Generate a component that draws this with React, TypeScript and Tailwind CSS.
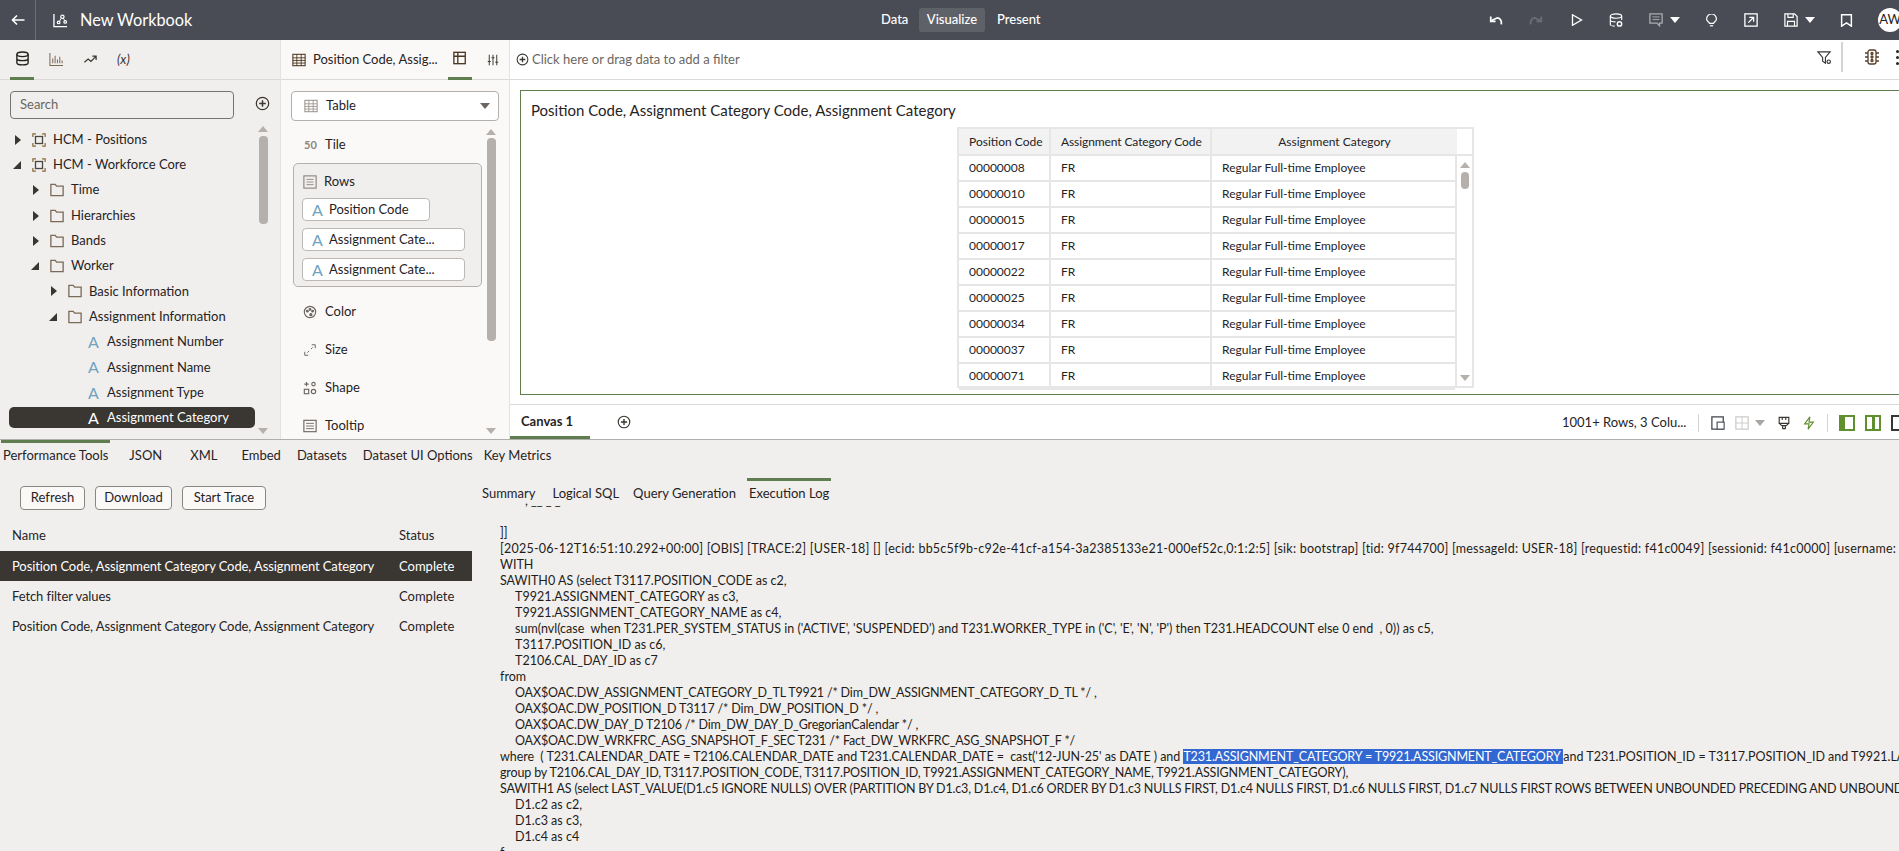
import React from 'react';

const font = { fontFamily: 'Lato, "Open Sans", sans-serif' };

const Svg = ({ size = 16, children, className = '' }: { size?: number; children: React.ReactNode; className?: string }) => (
    <svg width={size} height={size} viewBox="0 0 16 16" fill="none" stroke="currentColor" strokeWidth="1.3" className={`shrink-0 ${className}`}>
        {children}
    </svg>
);

const Caret = ({ className = '' }: { className?: string }) => (
    <span className={`block w-0 h-0 border-x-[5px] border-x-transparent border-t-[6px] ${className}`} />
);

const ArrowUp = () => <span className="block w-0 h-0 border-x-[5px] border-x-transparent border-b-[6px] border-b-[#b5b0ab]" />;
const ArrowDown = () => <span className="block w-0 h-0 border-x-[5px] border-x-transparent border-t-[6px] border-t-[#b5b0ab]" />;

const PlusCircle = ({ size = 14 }: { size?: number }) => (
    <Svg size={size}>
        <circle cx="8" cy="8" r="6.6" />
        <path d="M8 4.5v7M4.5 8h7" strokeWidth="1.6" />
    </Svg>
);

const TableIcon = ({ className = '' }: { className?: string }) => (
    <Svg size={14} className={className}>
        <rect x="1" y="1.5" width="14" height="13" strokeWidth="1.2" />
        <path d="M1 5.5h14M1 8.5h14M1 11.5h14M5.5 1.5v13M10.5 1.5v13" strokeWidth="1" />
    </Svg>
);

const AttrIcon = ({ active = false }: { active?: boolean }) => (
    <span className={`w-[11px] text-[16px] leading-none text-center shrink-0 ${active ? 'text-white' : 'text-[#6fa3c0]'}`}>A</span>
);

type TreeItem = { label: string; indent: number; kind: 'subject' | 'folder' | 'attr'; open?: boolean; active?: boolean };

const tree: TreeItem[] = [
    { label: 'HCM - Positions', indent: 0, kind: 'subject' },
    { label: 'HCM - Workforce Core', indent: 0, kind: 'subject', open: true },
    { label: 'Time', indent: 1, kind: 'folder' },
    { label: 'Hierarchies', indent: 1, kind: 'folder' },
    { label: 'Bands', indent: 1, kind: 'folder' },
    { label: 'Worker', indent: 1, kind: 'folder', open: true },
    { label: 'Basic Information', indent: 2, kind: 'folder' },
    { label: 'Assignment Information', indent: 2, kind: 'folder', open: true },
    { label: 'Assignment Number', indent: 3, kind: 'attr' },
    { label: 'Assignment Name', indent: 3, kind: 'attr' },
    { label: 'Assignment Type', indent: 3, kind: 'attr' },
    { label: 'Assignment Category', indent: 3, kind: 'attr', active: true },
];

const TreeRow = ({ item }: { item: TreeItem }) => {
    const pad = 13 + item.indent * 18;
    return (
        <div className="h-[25.3px] flex items-center relative text-[13px] text-[#26231f]" style={{ paddingLeft: pad }}>
            {item.kind !== 'attr' && (
                <span className="w-[10px] flex justify-start shrink-0">
                    {item.open ? (
                        <span className="block w-0 h-0 border-l-[8px] border-l-transparent border-b-[8px] border-b-[#3a3631]" />
                    ) : (
                        <span className="block w-0 h-0 ml-[2px] border-y-[5px] border-y-transparent border-l-[6px] border-l-[#3a3631]" />
                    )}
                </span>
            )}
            {item.kind === 'subject' && (
                <Svg size={14} className="ml-[9px] mr-[7px] text-[#4a4640]">
                    <path d="M1 4.5V1h3.5M11.5 1H15v3.5M15 11.5V15h-3.5M4.5 15H1v-3.5" strokeWidth="1.4" stroke="#8a6a3a" />
                    <rect x="4" y="4" width="8" height="8" strokeWidth="1.5" />
                </Svg>
            )}
            {item.kind === 'folder' && (
                <Svg size={14} className="ml-[9px] mr-[7px] text-[#7c6a58]">
                    <path d="M1 14.5V1.5h5l1.5 2H15v11z" strokeWidth="1.5" />
                </Svg>
            )}
            {item.kind === 'attr' && (
                <span className="mr-[8px] ml-[21px] flex">
                    <AttrIcon active={item.active} />
                </span>
            )}
            <span className={item.active ? 'text-white' : ''}>{item.label}</span>
        </div>
    );
};

const Grammar = ({ label, icon }: { label: string; icon: React.ReactNode }) => (
    <div className="h-[38px] flex items-center pl-[11px] gap-[8px] text-[13px] text-[#26231f]">
        <span className="w-[14px] flex justify-center text-[#6b6661]">{icon}</span>
        {label}
    </div>
);

const Pill = ({ label, width }: { label: string; width: string }) => (
    <div className={`h-[23px] ${width} bg-white border border-[#bdb8b3] rounded-[4px] flex items-center pl-[9px] gap-[6px] text-[13px] text-[#26231f]`}>
        <AttrIcon />
        {label}
    </div>
);

const codes = ['00000008', '00000010', '00000015', '00000017', '00000022', '00000025', '00000034', '00000037', '00000071'];

const Log = () => {
    const line = 'h-[16px] leading-[16px] whitespace-pre';
    const sub = `${line} pl-[15px]`;
    const tight = 'tracking-[-0.15px]';
    return (
        <div className="text-[12.5px] text-[#1f1c19] w-max">
            <div className="h-[22px] overflow-hidden pl-[25px]">
                <div className={`${line} -mt-[10px]`}>, __ _ _</div>
            </div>
            <div className={line}>]]</div>
            <div className={`${line} tracking-[0.23px]`}>[2025-06-12T16:51:10.292+00:00] [OBIS] [TRACE:2] [USER-18] [] [ecid: bb5c5f9b-c92e-41cf-a154-3a2385133e21-000ef52c,0:1:2:5] [sik: bootstrap] [tid: 9f744700] [messageId: USER-18] [requestid: f41c0049] [sessionid: f41c0000] [username: 3456</div>
            <div className={line}>WITH</div>
            <div className={line}>SAWITH0 AS (select T3117.POSITION_CODE as c2,</div>
            <div className={sub}>T9921.ASSIGNMENT_CATEGORY as c3,</div>
            <div className={sub}>T9921.ASSIGNMENT_CATEGORY_NAME as c4,</div>
            <div className={sub}>sum(nvl(case  when T231.PER_SYSTEM_STATUS in ('ACTIVE', 'SUSPENDED') and T231.WORKER_TYPE in ('C', 'E', 'N', 'P') then T231.HEADCOUNT else 0 end  , 0)) as c5,</div>
            <div className={sub}>T3117.POSITION_ID as c6,</div>
            <div className={sub}>T2106.CAL_DAY_ID as c7</div>
            <div className={line}>from</div>
            <div className={`${sub} ${tight}`}>OAX$OAC.DW_ASSIGNMENT_CATEGORY_D_TL T9921 /* Dim_DW_ASSIGNMENT_CATEGORY_D_TL */ ,</div>
            <div className={`${sub} ${tight}`}>OAX$OAC.DW_POSITION_D T3117 /* Dim_DW_POSITION_D */ ,</div>
            <div className={`${sub} ${tight}`}>OAX$OAC.DW_DAY_D T2106 /* Dim_DW_DAY_D_GregorianCalendar */ ,</div>
            <div className={`${sub} ${tight}`}>OAX$OAC.DW_WRKFRC_ASG_SNAPSHOT_F_SEC T231 /* Fact_DW_WRKFRC_ASG_SNAPSHOT_F */</div>
            <div className={line}>
                <span className="tracking-[-0.05px]">where  ( T231.CALENDAR_DATE = T2106.CALENDAR_DATE and T231.CALENDAR_DATE =  cast('12-JUN-25' as DATE ) and </span>
                <span className={`bg-[#3367d1] text-white ${tight}`}>T231.ASSIGNMENT_CATEGORY = T9921.ASSIGNMENT_CATEGORY </span>
                and T231.POSITION_ID = T3117.POSITION_ID and T9921.LA
            </div>
            <div className={`${line} ${tight}`}>group by T2106.CAL_DAY_ID, T3117.POSITION_CODE, T3117.POSITION_ID, T9921.ASSIGNMENT_CATEGORY_NAME, T9921.ASSIGNMENT_CATEGORY),</div>
            <div className={`${line} tracking-[-0.18px]`}>SAWITH1 AS (select LAST_VALUE(D1.c5 IGNORE NULLS) OVER (PARTITION BY D1.c3, D1.c4, D1.c6 ORDER BY D1.c3 NULLS FIRST, D1.c4 NULLS FIRST, D1.c6 NULLS FIRST, D1.c7 NULLS FIRST ROWS BETWEEN UNBOUNDED PRECEDING AND UNBOUND</div>
            <div className={sub}>D1.c2 as c2,</div>
            <div className={sub}>D1.c3 as c3,</div>
            <div className={sub}>D1.c4 as c4</div>
            <div className={line}>f</div>
        </div>
    );
};

export default function App() {
    return (
        <div className="w-[1899px] h-[851px] overflow-hidden flex flex-col bg-white" style={font}>
            {/* top bar */}
            <header className="h-[40px] shrink-0 bg-[#4a4c55] text-white flex items-center overflow-hidden">
                <div className="w-[881px] shrink-0 h-full flex items-center">
                    <div className="w-[36px] h-full border-r border-[#6d6f76] flex items-center justify-center">
                        <Svg size={16}><path d="M14.5 8H2.5M7 3.5L2.5 8 7 12.5" strokeWidth="1.6" /></Svg>
                    </div>
                    <Svg size={15} className="ml-[17px]">
                        <path d="M1 1v13.5h14" strokeWidth="1.4" />
                        <circle cx="6" cy="10" r="1.4" /><circle cx="10" cy="4" r="1.8" /><circle cx="13" cy="9.5" r="1.4" />
                        <path d="M6.8 9l2.2-3.6M11 5.5l1.5 2.6" strokeWidth="1" />
                    </Svg>
                    <span className="ml-[12px] text-[16.3px]">New Workbook</span>
                </div>
                <nav className="flex items-center text-[13px] font-medium">
                    <span className="w-[26px]">Data</span>
                    <span className="w-[66px] h-[24px] ml-[12px] bg-[#5f6168] rounded-[3px] flex items-center justify-center">Visualize</span>
                    <span className="ml-[12px]">Present</span>
                </nav>
                <div className="ml-auto w-[410px] shrink-0 h-full flex items-center">
                    <Svg size={14}><path d="M14 13c.8-3.5-.8-7-4.5-7.5L3 8.5" strokeWidth="2" /><path d="M2 4v5.5h5.5" strokeWidth="2" /></Svg>
                    <Svg size={14} className="ml-[26px] text-[#6d6f76]"><path d="M2 13c-.8-3.5.8-7 4.5-7.5l6.5 3" strokeWidth="2" /><path d="M14 4v5.5H8.5" strokeWidth="2" /></Svg>
                    <Svg size={12} className="ml-[28px]"><path d="M2 1l12 7-12 7z" strokeWidth="1.8" /></Svg>
                    <Svg size={14} className="ml-[26px]"><ellipse cx="8" cy="3.5" rx="6.5" ry="2.5" /><path d="M1.5 3.5v9.5c0 1 2.7 2 5 2M14.5 3.5v4.5M1.5 8c0 1.2 2.7 2.2 6 2.2" /><circle cx="12" cy="12.5" r="2.5" strokeWidth="1.6" /></Svg>
                    <Svg size={14} className="ml-[26px] text-[#a9abb0]"><path d="M1 1h14v10.5h-3v3l-3-3H1z" strokeWidth="1.5" /><path d="M4 4.5h8M4 7.5h8" strokeWidth="1.1" /></Svg>
                    <Caret className="ml-[7px] border-t-white" />
                    <Svg size={13} className="ml-[25px]"><path d="M5.5 11.5C4.7 9.5 2 8.8 2 6a6 6 0 0112 0c0 2.8-2.7 3.5-3.5 5.5z" strokeWidth="1.5" /><path d="M6 14.5h4" strokeWidth="1.5" /></Svg>
                    <Svg size={14} className="ml-[26px]"><rect x="1" y="1" width="14" height="14" strokeWidth="1.5" /><path d="M5 11l5.5-5.5M6 5h5v5" strokeWidth="1.5" /></Svg>
                    <Svg size={14} className="ml-[26px]"><path d="M1 1h11l3 3v11H1z" strokeWidth="1.4" /><path d="M4.5 1v4h6V1M4 15V9.5h8V15" /></Svg>
                    <Caret className="ml-[7px] border-t-white" />
                    <Svg size={13} className="ml-[25px]"><path d="M2 1h12v14L8 11l-6 4z" strokeWidth="1.8" /></Svg>
                    <div className="ml-[25px] w-[24px] h-[24px] rounded-full bg-white text-[#26231f] text-[13px] flex items-center justify-center shrink-0">AW</div>
                </div>
            </header>

            <div className="h-[400px] shrink-0 flex border-b border-[#b0aeac]">
                {/* data panel */}
                <aside className="w-[281px] shrink-0 bg-[#f1efed] border-r border-[#e4e2e0] flex flex-col">
                    <div className="h-[40px] shrink-0 border-b border-[#dcdad8] flex items-center text-[#3a3631]">
                        <span className="ml-[10px] border-b-[3px] border-[#5f7d4f] w-[24px] h-[40px] flex items-center justify-center">
                            <Svg size={15} className="text-[#26231f]"><ellipse cx="8" cy="3.5" rx="6" ry="2.5" strokeWidth="1.5" /><path d="M2 3.5v9c0 1.4 2.7 2.3 6 2.3s6-.9 6-2.3v-9M2 8c0 1.4 2.7 2.3 6 2.3S14 9.4 14 8" strokeWidth="1.5" /></Svg>
                        </span>
                        <Svg size={15} className="ml-[15px] text-[#7c6a58]"><path d="M1 1v13.5h14M4 12V7M6.5 12V4M9 12V8M11.5 12V5M14 12V9" strokeWidth="1.1" /></Svg>
                        <Svg size={15} className="ml-[19px]"><path d="M1.5 11l4-3.5 3 2.5 5-5M10 4.5h4v4" strokeWidth="1.3" /></Svg>
                        <span className="ml-[19px] text-[13px] italic">(x)</span>
                    </div>
                    <div className="flex items-center pl-[10px] mt-[11px]">
                        <div className="w-[224px] h-[28px] border border-[#77736f] rounded-[4px] flex items-center pl-[9px] text-[13px] text-[#6b6661]">Search</div>
                        <span className="ml-[21px] -mt-[4px] text-[#3a3631]"><PlusCircle size={15} /></span>
                    </div>
                    <div className="flex mt-[7px] relative flex-1 min-h-0">
                        <div className="w-[256px] pt-[1px]">
                            {tree.map((item) => (
                                <div key={item.label} className="relative">
                                    {item.active && <div className="absolute left-[9px] right-[1px] top-[2px] bottom-[3px] bg-[#3a3631] rounded-[5px]" />}
                                    <TreeRow item={item} />
                                </div>
                            ))}
                        </div>
                        <div className="w-[10px] ml-[2px] flex flex-col items-center">
                            <ArrowUp />
                            <div className="w-[9px] h-[88px] mt-[4px] bg-[#b5b0ab] rounded-[4px]" />
                            <div className="mt-auto mb-[5px]"><ArrowDown /></div>
                        </div>
                    </div>
                </aside>

                {/* grammar panel */}
                <aside className="w-[229px] shrink-0 bg-[#fbf9f8] border-r border-[#e4e2e0] flex flex-col">
                    <div className="h-[40px] shrink-0 border-b border-[#dcdad8] flex items-center pl-[11px] text-[13px] text-[#26231f]">
                        <TableIcon className="text-[#4a3520]" />
                        <span className="ml-[7px] w-[124px] whitespace-nowrap">Position Code, Assig...</span>
                        <span className="ml-[11px] w-[24px] h-[40px] border-b-[3px] border-[#5f7d4f] flex items-center justify-center">
                            <Svg size={14} className="text-[#4a3520]"><rect x="1" y="1.5" width="13" height="13" strokeWidth="1.5" /><path d="M1 6h13M5.5 1.5v13" strokeWidth="1.5" /></Svg>
                        </span>
                        <Svg size={12} className="ml-[15px] text-[#3a3631]"><path d="M3 1v14M8 1v14M13 1v14M1 10h4M6 5h4M11 11h4" strokeWidth="1.3" /></Svg>
                    </div>
                    <div className="mt-[11px] ml-[10px] w-[208px] h-[30px] bg-white border border-[#b5b0ab] rounded-[4px] flex items-center pl-[12px] pr-[8px] text-[13px] text-[#26231f]">
                        <TableIcon className="text-[#9a948e]" />
                        <span className="ml-[8px]">Table</span>
                        <Caret className="ml-auto border-t-[#6b6661]" />
                    </div>
                    <div className="flex flex-1 min-h-0 mt-[5px]">
                        <div className="w-[203px] pl-[12px]">
                            <div className="h-[38px] flex items-center pl-[11px] gap-[8px] text-[13px] text-[#26231f]">
                                <span className="w-[13px] text-[11px] font-bold text-[#8c8680]">50</span>
                                Tile
                            </div>
                            <div className="w-[189px] h-[124px] -mt-[1px] bg-[#f1efed] border border-[#b5b0ab] rounded-[5px] pl-[8px] pt-[6px]">
                                <div className="h-[24px] flex items-center gap-[7px] ml-[1px] text-[13px] text-[#26231f]">
                                    <Svg size={14} className="text-[#8c8680]"><rect x="1" y="1" width="14" height="14" /><path d="M4 5h8M4 8h8M4 11h8" strokeWidth="1" /></Svg>
                                    Rows
                                </div>
                                <div className="flex flex-col gap-[7px] mt-[4px]">
                                    <Pill label="Position Code" width="w-[128px]" />
                                    <Pill label="Assignment Cate..." width="w-[163px]" />
                                    <Pill label="Assignment Cate..." width="w-[163px]" />
                                </div>
                            </div>
                            <div className="-ml-[1px] mt-[6px]">
                                <Grammar label="Color" icon={<Svg size={14}><circle cx="8" cy="8" r="6.5" /><circle cx="5" cy="7" r="1" fill="currentColor" /><circle cx="8" cy="5" r="1" fill="currentColor" /><circle cx="11" cy="7" r="1" fill="currentColor" /><circle cx="9" cy="11" r="1.2" fill="currentColor" /></Svg>} />
                                <Grammar label="Size" icon={<Svg size={14}><path d="M10 2h4v4M2 10v4h4M9 7l2-2M5 11l2-2" strokeWidth="1.1" /></Svg>} />
                                <Grammar label="Shape" icon={<Svg size={14}><path d="M4 1v5M1.5 3.5h5" /><circle cx="12" cy="3.5" r="2" /><rect x="1.5" y="9.5" width="5" height="5" /><circle cx="12" cy="12" r="2.5" /></Svg>} />
                                <Grammar label="Tooltip" icon={<Svg size={14}><rect x="1" y="1.5" width="14" height="13" /><path d="M3.5 5h9M3.5 8h9M3.5 11h9" strokeWidth="1" /></Svg>} />
                            </div>
                        </div>
                        <div className="w-[10px] ml-[2px] flex flex-col items-center pt-[3px]">
                            <ArrowUp />
                            <div className="w-[9px] h-[203px] mt-[3px] bg-[#b5b0ab] rounded-[4px]" />
                            <div className="mt-auto mb-[5px]"><ArrowDown /></div>
                        </div>
                    </div>
                </aside>

                {/* canvas */}
                <main className="flex-1 min-w-0 flex flex-col bg-white">
                    <div className="h-[40px] shrink-0 border-b border-[#dcdad8] flex items-center pl-[6px] relative text-[13px] text-[#6b6661]">
                        <span className="text-[#3a3631] mr-[3px]"><PlusCircle size={13} /></span>
                        Click here or drag data to add a filter
                        <div className="absolute left-[1307px] top-[2px] h-[30px] flex items-center">
                            <Svg size={15} className="text-[#3a3631]"><path d="M1 2h13L9 8v6l-3-2V8z" strokeWidth="1.2" /><circle cx="12.5" cy="12.5" r="1.8" strokeWidth="1.2" /></Svg>
                            <div className="w-[2px] h-[30px] bg-[#d6d4d2] ml-[9px]" />
                            <Svg size={16} className="ml-[21px] text-[#5a3f28]"><rect x="4" y="1" width="8" height="14" rx="2" /><circle cx="8" cy="4.5" r="1" /><circle cx="8" cy="8" r="1" /><circle cx="8" cy="11.5" r="1" /><path d="M1 4h3M12 4h3M1 8h3M12 8h3M1 12h3M12 12h3" /></Svg>
                            <div className="ml-[16px] flex flex-col gap-[3px]">
                                <span className="w-[3px] h-[3px] bg-[#26231f] rounded-full" />
                                <span className="w-[3px] h-[3px] bg-[#26231f] rounded-full" />
                                <span className="w-[3px] h-[3px] bg-[#26231f] rounded-full" />
                            </div>
                        </div>
                    </div>
                    <div className="h-[325px] shrink-0 pl-[10px] pt-[10px] border-b border-[#dcdad8]">
                        <div className="h-[305px] w-[1500px] border border-[#5f7d4f] pl-[10px]">
                            <div className="h-[36px] pt-[2px] flex items-center text-[15px] text-[#26231f]">Position Code, Assignment Category Code, Assignment Category</div>
                            <div className="ml-[426px] w-[517px] h-[261px] border-2 border-[#e6e6e6] text-[12px] text-[#26231f] flex flex-col">
                                <div className="h-[25px] flex shrink-0">
                                    <div className="w-[92px] bg-[#f2f2f2] border-r-2 border-[#e6e6e6] flex items-center pl-[10px]">Position Code</div>
                                    <div className="w-[161px] bg-[#f2f2f2] border-r-2 border-[#e6e6e6] flex items-center pl-[10px] tracking-[-0.1px]">Assignment Category Code</div>
                                    <div className="w-[245px] bg-[#f2f2f2] flex items-center justify-center">Assignment Category</div>
                                </div>
                                <div className="flex flex-1 min-h-0 border-t-2 border-[#e6e6e6]">
                                    <div className="w-[498px] border-r-2 border-[#e6e6e6]">
                                        {codes.map((c) => (
                                            <div key={c} className="h-[26px] flex border-b-2 border-[#e6e6e6]">
                                                <div className="w-[92px] border-r-2 border-[#e6e6e6] flex items-center pl-[10px] pb-[1px]">{c}</div>
                                                <div className="w-[161px] border-r-2 border-[#e6e6e6] flex items-center pl-[10px] pb-[1px]">FR</div>
                                                <div className="flex-1 flex items-center pl-[10px] pb-[1px]">Regular Full-time Employee</div>
                                            </div>
                                        ))}
                                    </div>
                                    <div className="flex-1 flex flex-col items-center pt-[6px]">
                                        <ArrowUp />
                                        <div className="w-[8px] h-[17px] mt-[4px] bg-[#b5b0ab] rounded-[4px]" />
                                        <div className="mt-auto mb-[5px]"><ArrowDown /></div>
                                    </div>
                                </div>
                            </div>
                        </div>
                    </div>
                    <div className="flex-1 flex items-center relative text-[13px] text-[#26231f]">
                        <div className="w-[80px] h-full border-b-[3px] border-[#5f7d4f] flex items-center pl-[11px] pt-[2px] font-bold">Canvas 1</div>
                        <span className="ml-[27px] text-[#3a3631]"><PlusCircle size={14} /></span>
                        <div className="absolute left-[1052px] top-0 h-full flex items-center whitespace-nowrap pt-[2px]">
                            <span className="w-[122px]">1001+ Rows, 3 Colu...</span>
                            <div className="w-px h-[18px] bg-[#d6d4d2] ml-[14px]" />
                            <Svg size={14} className="ml-[12px] text-[#4a4c55]"><rect x="1" y="1" width="13" height="14" strokeWidth="1.5" /><rect x="7" y="7" width="8" height="8" fill="white" strokeWidth="1.3" /></Svg>
                            <Svg size={14} className="ml-[10px] text-[#c8c6c4]"><rect x="1" y="1" width="14" height="14" /><path d="M8 1v14M1 8h14" strokeWidth="1" /></Svg>
                            <Caret className="ml-[6px] border-t-[#a9a5a1]" />
                            <Svg size={14} className="ml-[12px] text-[#3a3631]"><path d="M2.5 1.5h11v7h-11zM2.5 8.5l3 2.5h5l3-2.5M6.5 11v3.5h3V11M6 1.5v3M10 1.5v3" strokeWidth="1.3" /></Svg>
                            <Svg size={14} className="ml-[11px] text-[#5f8f2f]"><path d="M9 1L3 9h5l-1 6 6-8H8z" strokeWidth="1.3" /></Svg>
                            <div className="w-px h-[18px] bg-[#d6d4d2] ml-[11px]" />
                            <div className="ml-[11px] w-[16px] h-[16px] border-2 border-[#5f8f2f] flex"><span className="w-[4px] bg-[#5f8f2f]" /></div>
                            <div className="ml-[10px] w-[16px] h-[16px] border-2 border-[#5f8f2f] flex justify-center"><span className="w-[3px] bg-[#5f8f2f]" /></div>
                            <div className="ml-[10px] w-[16px] h-[16px] border-2 border-[#3a3631]" />
                        </div>
                    </div>
                </main>
            </div>

            {/* bottom tools */}
            <section className="flex-1 min-h-0 bg-[#f1efed] text-[#26231f] text-[13px] relative overflow-hidden">
                <div className="h-[30px] flex items-center relative pt-[1px]">
                    <div className="absolute left-[1px] top-0 w-[109px] h-[3px] bg-[#5f7d4f]" />
                    <span className="ml-[3px]">Performance Tools</span>
                    <span className="ml-[21px]">JSON</span>
                    <span className="ml-[28px]">XML</span>
                    <span className="ml-[24px]">Embed</span>
                    <span className="ml-[16px]">Datasets</span>
                    <span className="ml-[16px]">Dataset UI Options</span>
                    <span className="ml-[11px]">Key Metrics</span>
                </div>
                <div className="flex h-[381px]">
                    <div className="w-[472px] shrink-0">
                        <div className="flex gap-[10px] pl-[20px] mt-[16px]">
                            <button className="w-[65px] h-[24px] bg-[#fbf9f8] border border-[#8c8680] rounded-[4px]">Refresh</button>
                            <button className="w-[77px] h-[24px] bg-[#fbf9f8] border border-[#8c8680] rounded-[4px]">Download</button>
                            <button className="w-[84px] h-[24px] bg-[#fbf9f8] border border-[#8c8680] rounded-[4px]">Start Trace</button>
                        </div>
                        <div className="h-[30px] mt-[11px] flex items-center">
                            <span className="pl-[12px] w-[399px]">Name</span>
                            <span>Status</span>
                        </div>
                        {[
                            ['Position Code, Assignment Category Code, Assignment Category', true],
                            ['Fetch filter values', false],
                            ['Position Code, Assignment Category Code, Assignment Category', false],
                        ].map(([name, active], i) => (
                            <div key={i} className={`h-[30px] flex items-center pt-[2px] ${active ? 'bg-[#3a3631] text-white' : ''}`}>
                                <span className="pl-[12px] w-[399px] tracking-[-0.1px]">{name}</span>
                                <span>Complete</span>
                            </div>
                        ))}
                    </div>
                    <div className="flex-1 min-w-0 overflow-hidden">
                        <div className="h-[33px] pt-[15px] flex items-center">
                            <span className="ml-[10px]">Summary</span>
                            <span className="ml-[17px]">Logical SQL</span>
                            <span className="ml-[14px]">Query Generation</span>
                            <span className="ml-[13px] relative">
                                Execution Log
                                <span className="absolute left-[-2px] right-[-2px] -top-[6px] h-[3px] bg-[#5f7d4f]" />
                            </span>
                        </div>
                        <div className="h-[348px] overflow-hidden pl-[28px]">
                            <Log />
                        </div>
                    </div>
                </div>
            </section>
        </div>
    );
}
